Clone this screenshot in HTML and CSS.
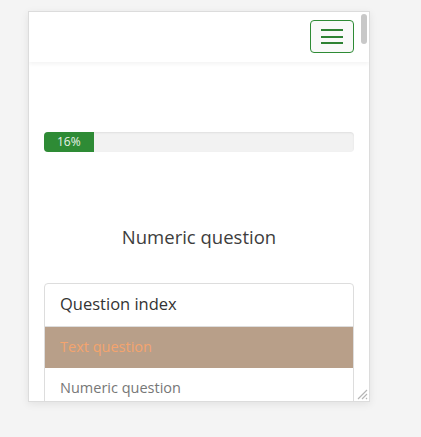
FILE: index.html
```html
<!DOCTYPE html>
<html>
<head>
<meta charset="utf-8">
<link rel="stylesheet" href="styles.css">
</head>
<body>
<div class="frame">
  <div class="page">
    <header class="navbar">
      <button class="toggler" aria-label="menu">
        <span class="bar"></span><span class="bar"></span><span class="bar"></span>
      </button>
    </header>
    <main class="content">
      <div class="progress"><div class="progress-fill" style="width:16%">16%</div></div>
      <h2 class="title">Numeric question</h2>
      <div class="list">
        <div class="list-head">Question index</div>
        <div class="list-item active">Text question</div>
        <div class="list-item">Numeric question</div>
      </div>
    </main>
  </div>
  <div class="thumb"></div>
  <svg class="grip" width="12" height="12" viewBox="0 0 12 12">
    <path d="M11 2 L2 11 M11 6 L6 11 M11 10 L10 11" stroke="#b5b5b5" stroke-width="1.2" fill="none"/>
  </svg>
</div>
</body>
</html>
```
FILE: styles.css
```css
html, body { margin: 0; padding: 0; }
body {
  background: #f4f4f4;
  font-family: "Open Sans", "DejaVu Sans", sans-serif;
  color: #333;
  height: 437px;
  overflow: hidden;
}
.frame {
  position: relative;
  margin: 11px 0 0 28px;
  width: 340px;
  height: 389px;
  border: 1px solid #dcdcdc;
  background: #fff;
  overflow: hidden;
  box-shadow: 0 2px 8px rgba(0,0,0,0.08);
}
.page { height: 100%; overflow: hidden; }
.navbar {
  height: 50px;
  display: flex;
  justify-content: flex-end;
  align-items: flex-start;
  padding: 0 15px;
  box-shadow: 0 2px 4px rgba(0,0,0,0.05);
  position: relative;
}
.toggler {
  margin-top: 8px;
  width: 44px;
  height: 33px;
  box-sizing: border-box;
  border: 1px solid #2e8b35;
  border-radius: 4px;
  background: #f9f9f9;
  display: flex;
  flex-direction: column;
  justify-content: center;
  align-items: center;
  gap: 4.5px;
  padding: 0;
}
.bar { display: block; width: 22px; height: 2px; background: #2e8233; }
.content { padding: 70px 15px 0; }
.progress {
  height: 20px;
  background: #f2f2f2;
  border-radius: 4px;
  overflow: hidden;
  box-shadow: inset 0 1px 2px rgba(0,0,0,0.08);
}
.progress-fill {
  height: 100%;
  background: #2e8b35;
  color: #e8f2e8;
  font-size: 12px;
  line-height: 20px;
  text-align: center;
}
.title {
  margin: 73px 0 0;
  font-size: 18.5px;
  font-weight: 400;
  text-align: center;
  line-height: 24px;
  color: #3d3d3d;
}
.list {
  margin-top: 34px;
  border: 1px solid #ddd;
  border-radius: 4px;
}
.list-head {
  font-size: 16.5px;
  line-height: 22px;
  padding: 9px 15px 11px;
  border-bottom: 1px solid #ddd;
}
.list-item {
  font-size: 14.5px;
  line-height: 20px;
  padding: 10px 15px;
  color: #777;
  border-bottom: 1px solid #ddd;
}
.list-item.active { background: #b89f89; color: #f4a46e; border-bottom-color: #b89f89; }
.thumb {
  position: absolute;
  right: 2px;
  top: 2px;
  width: 6px;
  height: 30px;
  border-radius: 3px;
  background: #c8c8c8;
}
.grip { position: absolute; right: 1px; bottom: 1px; }
```
